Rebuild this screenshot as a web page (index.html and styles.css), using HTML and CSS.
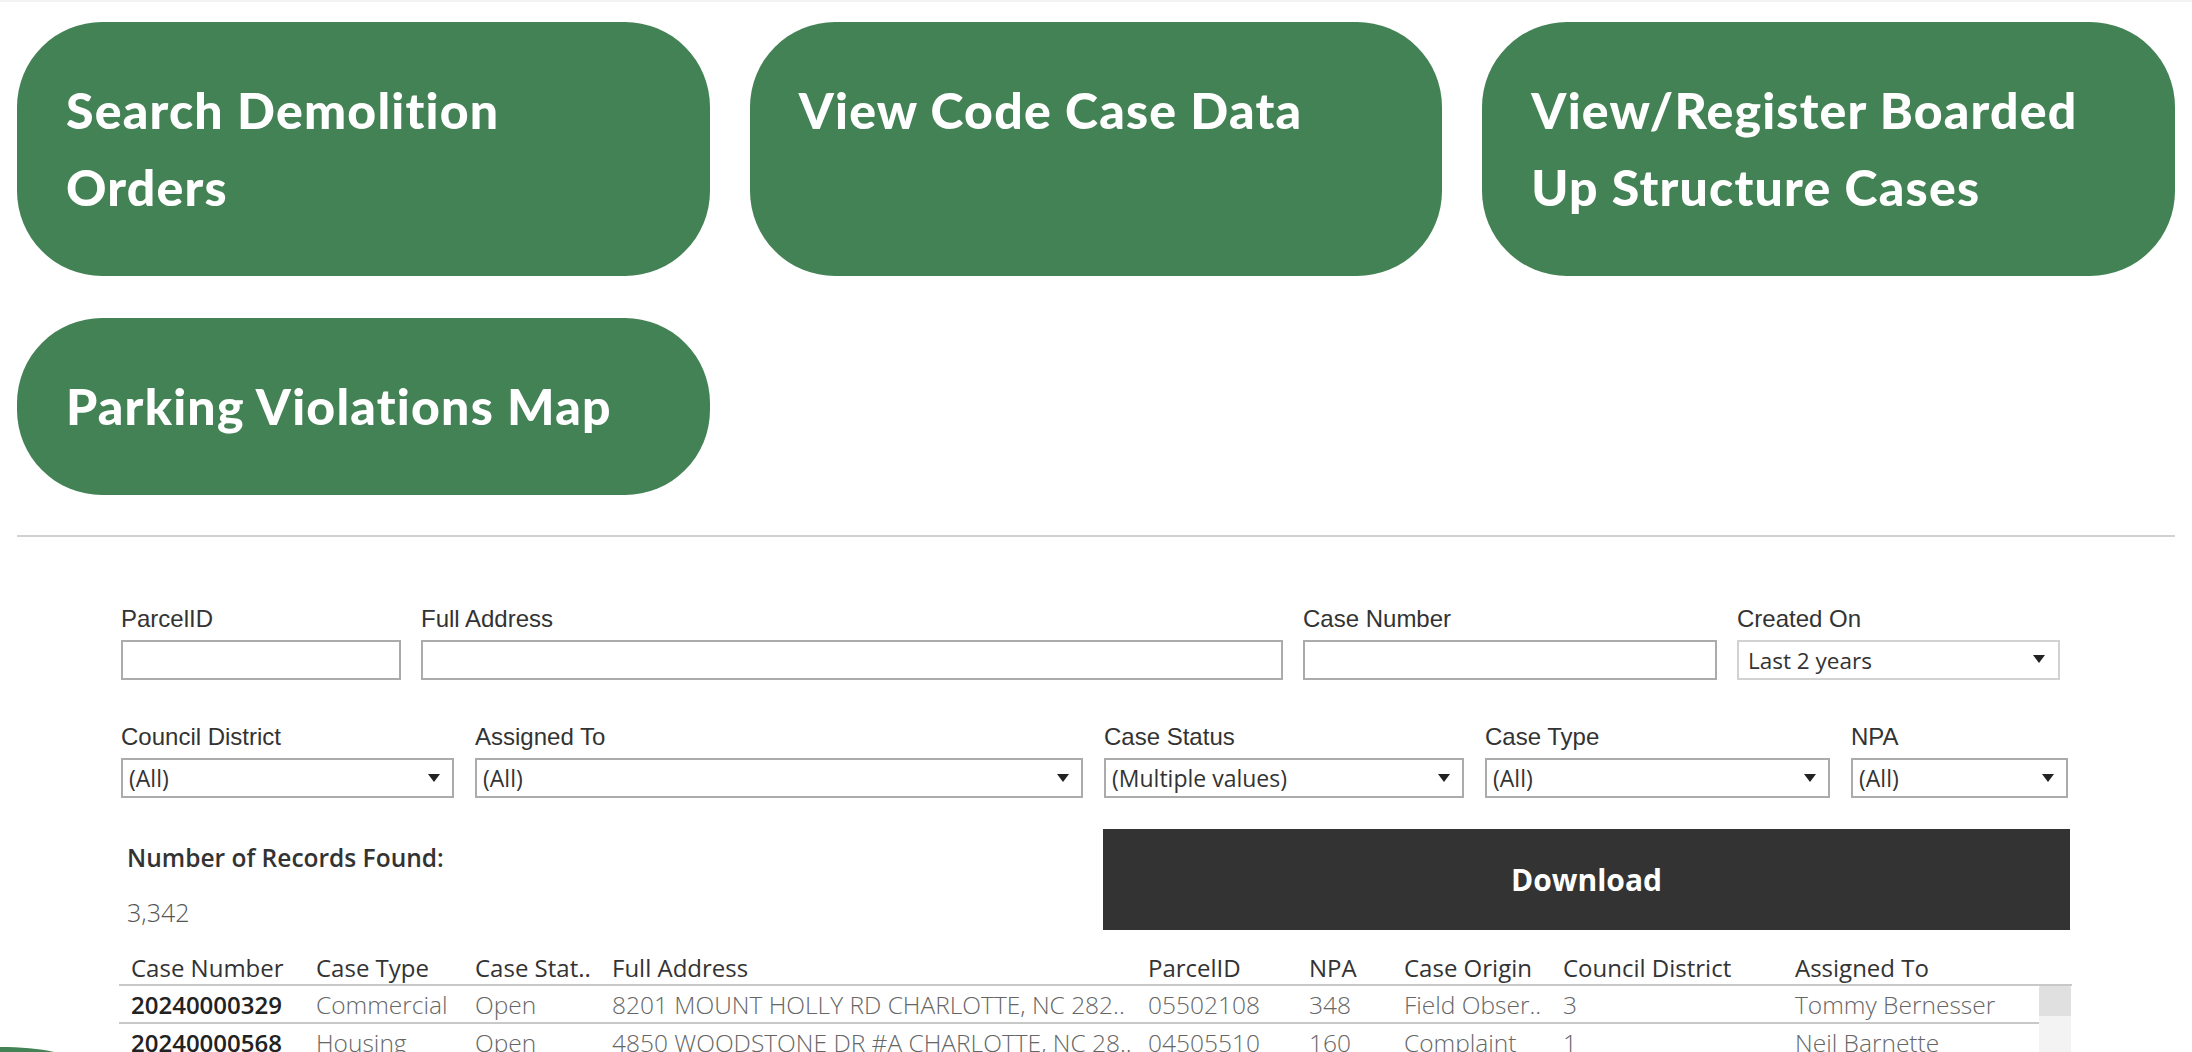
FILE: index.html
```html
<!DOCTYPE html>
<html lang="en">
<head>
<meta charset="utf-8">
<title>Code Enforcement Cases</title>
<link rel="stylesheet" href="styles.css">
</head>
<body>
<main class="page">
  <nav class="tiles">
    <a class="tile" href="#">Search Demolition<br>Orders</a>
    <a class="tile" href="#">View Code Case Data</a>
    <a class="tile" href="#">View/Register Boarded<br>Up Structure Cases</a>
    <a class="tile" href="#">Parking Violations Map</a>
  </nav>
  <hr class="divider">
  <section class="viz">
    <div class="filters row1">
      <div class="field w-parcel"><div class="label">ParcelID</div><div class="input"></div></div>
      <div class="field w-address"><div class="label">Full Address</div><div class="input"></div></div>
      <div class="field w-casenum"><div class="label">Case Number</div><div class="input"></div></div>
      <div class="field w-created"><div class="label">Created On</div><div class="select light"><span>Last 2 years</span><i class="caret"></i></div></div>
    </div>
    <div class="filters row2">
      <div class="field w-district"><div class="label">Council District</div><div class="select"><span>(All)</span><i class="caret"></i></div></div>
      <div class="field w-assigned"><div class="label">Assigned To</div><div class="select"><span>(All)</span><i class="caret"></i></div></div>
      <div class="field w-status"><div class="label">Case Status</div><div class="select"><span>(Multiple values)</span><i class="caret"></i></div></div>
      <div class="field w-type"><div class="label">Case Type</div><div class="select"><span>(All)</span><i class="caret"></i></div></div>
      <div class="field w-npa"><div class="label">NPA</div><div class="select"><span>(All)</span><i class="caret"></i></div></div>
    </div>
    <div class="summary">
      <div class="count">
        <div class="count-title">Number of Records Found:</div>
        <div class="count-value">3,342</div>
      </div>
      <button class="download" type="button">Download</button>
    </div>
    <div class="table">
      <div class="thead">
        <div>Case Number</div><div>Case Type</div><div>Case Stat..</div><div>Full Address</div><div>ParcelID</div><div>NPA</div><div>Case Origin</div><div>Council District</div><div>Assigned To</div>
      </div>
      <div class="tbody">
        <div class="rows">
          <div class="tr">
            <div class="num">20240000329</div><div>Commercial</div><div>Open</div><div>8201 MOUNT HOLLY RD CHARLOTTE, NC 282..</div><div>05502108</div><div>348</div><div>Field Obser..</div><div>3</div><div>Tommy Bernesser</div>
          </div>
          <div class="tr">
            <div class="num">20240000568</div><div>Housing</div><div>Open</div><div>4850 WOODSTONE DR #A CHARLOTTE, NC 28..</div><div>04505510</div><div>160</div><div>Complaint</div><div>1</div><div>Neil Barnette</div>
          </div>
        </div>
        <div class="scrollbar"><div class="thumb"></div></div>
      </div>
    </div>
  </section>
</main>
<svg class="corner-deco" width="60" height="6" viewBox="0 0 60 6" aria-hidden="true"><path d="M0 1 C 20 1, 40 2.5, 54 6 L0 6 Z" fill="#438254"/></svg>
</body>
</html>
```
FILE: styles.css
```css
html { overflow: hidden; }
body {
  margin: 0;
  border-top: 2px solid #f3f3f3;
  background: #fff;
  font-family: "Open Sans", "Noto Sans", sans-serif;
  color: #333;
}
.page { padding: 20px 17px 0; }

.tiles {
  display: grid;
  grid-template-columns: repeat(3, 1fr);
  column-gap: 40px;
  row-gap: 42px;
}
.tile {
  display: block;
  background: #438254;
  color: #fff;
  text-decoration: none;
  border-radius: 85px;
  padding: 50px 49px;
  font-family: "Lato", "Liberation Sans", sans-serif;
  font-weight: 900;
  font-size: 50px;
  letter-spacing: 1.2px;
  line-height: 77px;
  white-space: nowrap;
}

.divider {
  border: 0;
  height: 2px;
  background: #d2d2d2;
  margin: 40px 0 0;
}

.viz { width: 1952px; margin: 70px auto 0; }

.filters { display: flex; padding-left: 1px; }
.row1 { gap: 0 20px; }
.row2 { gap: 0 21px; margin-top: 45px; }
.field { display: flex; flex-direction: column; }
.label {
  font-family: "Liberation Sans", Arial, sans-serif;
  font-size: 24px;
  line-height: 24px;
  color: #333;
  margin-bottom: 9px;
  white-space: nowrap;
}
.input, .select {
  box-sizing: border-box;
  height: 40px;
  border: 2px solid #ababab;
  background: #fff;
}
.select {
  display: flex;
  align-items: center;
  justify-content: space-between;
  padding: 0 12px 0 6px;
  font-size: 23px;
  color: #333;
  white-space: nowrap;
}
.select.light { border-color: #d2d2d2; padding-left: 9px; padding-right: 13px; font-size: 22.5px; }
.select.light .caret { margin-top: -3px; }
.caret {
  width: 0; height: 0;
  border-left: 6px solid transparent;
  border-right: 6px solid transparent;
  border-top: 8px solid #222;
}
.w-parcel { width: 280px; }
.w-address { width: 862px; }
.w-casenum { width: 414px; }
.w-created { width: 323px; }
.w-district { width: 333px; }
.w-assigned { width: 608px; }
.w-status { width: 360px; }
.w-type { width: 345px; }
.w-npa { width: 217px; }

.summary {
  display: grid;
  grid-template-columns: 983px 967px;
  margin-top: 31px;
  height: 101px;
}
.count { padding: 14px 0 0 7px; }
.count-title { font-size: 24.5px; font-weight: 600; line-height: 30px; color: #333; }
.count-value { font-size: 25px; font-weight: 300; line-height: 30px; color: #555; margin-top: 24px; }
.download {
  border: 0;
  background: #333333;
  color: #fff;
  font-family: "Open Sans", sans-serif;
  font-weight: 700;
  font-size: 30px;
  cursor: pointer;
}

.table { margin-left: -1px; width: 1953px; }
.thead, .tr {
  display: grid;
  grid-template-columns: 185px 159px 137px 536px 161px 95px 159px 232px 256px;
}
.thead > div, .tr > div {
  padding-left: 12px;
  white-space: nowrap;
}
.thead {
  height: 56px;
  box-sizing: border-box;
  align-items: end;
  line-height: 32px;
  font-size: 24px;
  color: #333;
  border-bottom: 2px solid #c8c8c8;
}
.tbody { display: flex; }
.rows { width: 1920px; }
.tr {
  height: 38px;
  box-sizing: border-box;
  padding-top: 2px;
  line-height: 34px;
  font-size: 24.5px;
  font-weight: 300;
  color: #666;
  border-bottom: 2px solid #c8c8c8;
}
.tr .num { font-weight: 600; font-size: 24px; color: #222; }
.scrollbar { width: 32px; background: #f3f3f3; height: 80px; }
.thumb { height: 30px; background: #e0e0e0; border-radius: 2px 2px 0 0; }

.corner-deco { position: fixed; left: 0; bottom: 0; display: block; }
```
